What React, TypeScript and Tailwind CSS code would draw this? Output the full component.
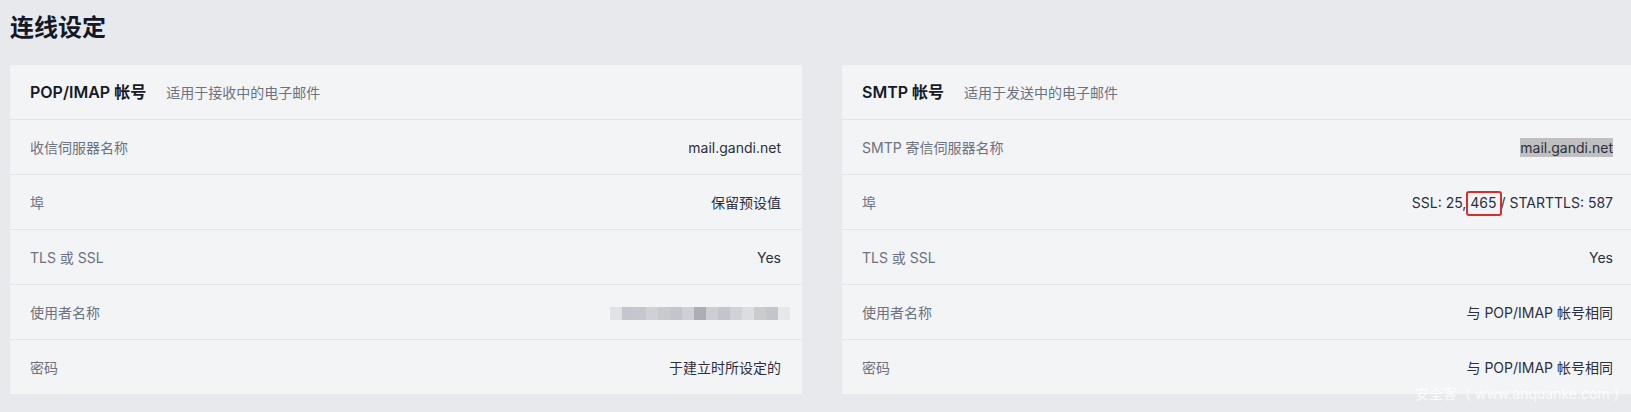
import React from "react";

interface Row {
  label: string;
  value: React.ReactNode;
}

const font = "font-['Inter','Noto_Sans_CJK_SC',sans-serif]";

// pixelated username, shades taken from the screenshot
const blurShades = [
  "#e1e2e6", "#c4c5cd", "#c6c7ce", "#d0d1d6", "#c8cacd", "#c3c4cc", "#cfd0d5",
  "#abaeb4", "#cdced3", "#c2c5cc", "#d1d2d7", "#dcdde1", "#c9cccd", "#c3c4cc", "#e6e7ea",
];

function BlurredName() {
  return (
    <div className="flex h-[13px] mr-[-9px] mt-[2px]">
      {blurShades.map((c, i) => (
        <div key={i} className="w-[12px] h-full" style={{ backgroundColor: c }} />
      ))}
    </div>
  );
}

function AccountCard({
  title,
  subtitle,
  rows,
}: {
  title: string;
  subtitle: string;
  rows: Row[];
}) {
  return (
    <div className="w-[792px] shrink-0 bg-[#f3f4f6]">
      <div className="h-[55px] flex items-center px-5 border-b border-[#e3e5e9]">
        <span className="text-[16px] font-semibold text-[#161a26]">{title}</span>
        <span className="ml-5 text-[14px] text-[#6b7280]">{subtitle}</span>
      </div>
      {rows.map((row, i) => (
        <div
          key={row.label}
          className={`flex items-center justify-between px-5 pr-[21px] ${
            i === rows.length - 1 ? "h-[54px]" : "h-[55px] border-b border-[#e3e5e9]"
          }`}
        >
          <span className="text-[14px] text-[#6b7280]">{row.label}</span>
          <span className="text-[14px] text-[#2b303b]">{row.value}</span>
        </div>
      ))}
    </div>
  );
}

export default function App() {
  const popRows: Row[] = [
    { label: "收信伺服器名称", value: "mail.gandi.net" },
    { label: "埠", value: "保留预设值" },
    { label: "TLS 或 SSL", value: "Yes" },
    { label: "使用者名称", value: <BlurredName /> },
    { label: "密码", value: "于建立时所设定的" },
  ];

  const smtpRows: Row[] = [
    {
      label: "SMTP 寄信伺服器名称",
      value: <span className="bg-[#c0c0c0] py-[1px]">mail.gandi.net</span>,
    },
    {
      label: "埠",
      value: (
        <>
          SSL: 25,{" "}
          <span className="relative">
            465
            <span className="absolute left-[-4px] right-[-5px] top-[-3px] bottom-[-5px] border-[2.5px] border-[#d2302c] rounded-[3px]" />
          </span>{" "}
          / STARTTLS: 587
        </>
      ),
    },
    { label: "TLS 或 SSL", value: "Yes" },
    { label: "使用者名称", value: "与 POP/IMAP 帐号相同" },
    { label: "密码", value: "与 POP/IMAP 帐号相同" },
  ];

  return (
    <div className={`${font} relative min-h-[412px] w-full overflow-hidden bg-[#e7e9ec] pl-[10px]`}>
      <h1 className="mt-3 h-8 text-[24px] leading-8 font-bold text-[#141827]">连线设定</h1>
      <div className="mt-[21px] flex gap-10">
        <AccountCard title="POP/IMAP 帐号" subtitle="适用于接收中的电子邮件" rows={popRows} />
        <AccountCard title="SMTP 帐号" subtitle="适用于发送中的电子邮件" rows={smtpRows} />
      </div>
      <div className="absolute left-[1415px] top-[383px] text-[14px] text-white/80 whitespace-nowrap">
        安全客（ www.anquanke.com ）
      </div>
    </div>
  );
}
